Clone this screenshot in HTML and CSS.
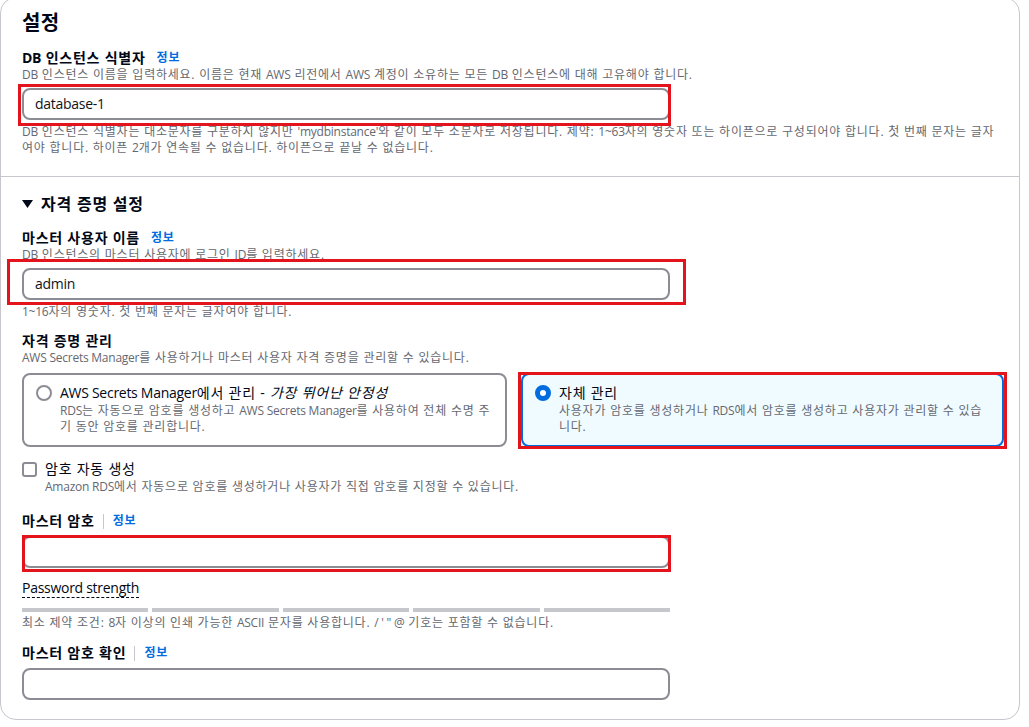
FILE: index.html
```html
<!DOCTYPE html>
<html lang="ko">
<head>
<meta charset="utf-8">
<title>설정</title>
<link rel="stylesheet" href="styles.css">
</head>
<body>
<div class="card">
  <section class="sec sec-top">
    <h2 class="title">설정</h2>
    <div class="field f-first">
      <div class="label"><span><span lang="en">DB</span> 인스턴스 식별자</span><a class="info">정보</a></div>
      <div class="desc"><span lang="en">DB</span> 인스턴스 이름을 입력하세요. 이름은 현재 <span lang="en">AWS</span> 리전에서 <span lang="en">AWS</span> 계정이 소유하는 모든 <span lang="en">DB</span> 인스턴스에 대해 고유해야 합니다.</div>
      <div class="annot">
        <div class="input" lang="en">database-1</div>
        <span class="mark mark-1"></span>
      </div>
      <div class="hint"><span lang="en">DB</span> 인스턴스 식별자는 대소문자를 구분하지 않지만 <span lang="en">'mydbinstance'</span>와 같이 모두 소문자로 저장됩니다. 제약: <span lang="en">1~63</span>자의 영숫자 또는 하이픈으로 구성되어야 합니다. 첫 번째 문자는 글자여야 합니다. 하이픈 <span lang="en">2</span>개가 연속될 수 없습니다. 하이픈으로 끝날 수 없습니다.</div>
    </div>
  </section>
  <section class="sec sec-cred">
    <div class="expander">
      <svg class="caret" width="11" height="8" viewBox="0 0 11 8"><polygon points="0,0 11,0 5.5,8" fill="#000716"/></svg>
      <span>자격 증명 설정</span>
    </div>
    <div class="field f-user">
      <div class="label"><span>마스터 사용자 이름</span><a class="info">정보</a></div>
      <div class="desc"><span lang="en">DB</span> 인스턴스의 마스터 사용자에 로그인 <span lang="en">ID</span>를 입력하세요.</div>
      <div class="annot">
        <div class="input" lang="en">admin</div>
        <span class="mark mark-2"></span>
      </div>
      <div class="hint"><span lang="en">1~16</span>자의 영숫자. 첫 번째 문자는 글자여야 합니다.</div>
    </div>
    <div class="field f-manage">
      <div class="label"><span>자격 증명 관리</span></div>
      <div class="desc"><span lang="en">AWS Secrets Manager</span>를 사용하거나 마스터 사용자 자격 증명을 관리할 수 있습니다.</div>
      <div class="tiles">
        <div class="tile">
          <span class="radio"></span>
          <div class="tile-body">
            <div class="tile-title"><span lang="en">AWS Secrets Manager</span>에서 관리 - <em>가장 뛰어난 안정성</em></div>
            <div class="tile-desc"><span lang="en">RDS</span>는 자동으로 암호를 생성하고 <span lang="en">AWS Secrets Manager</span>를 사용하여 전체 수명 주기 동안 암호를 관리합니다.</div>
          </div>
        </div>
        <div class="annot">
          <div class="tile tile-on">
            <span class="radio radio-on"></span>
            <div class="tile-body">
              <div class="tile-title">자체 관리</div>
              <div class="tile-desc">사용자가 암호를 생성하거나 <span lang="en">RDS</span>에서 암호를 생성하고 사용자가 관리할 수 있습니다.</div>
            </div>
          </div>
          <span class="mark mark-3"></span>
        </div>
      </div>
    </div>
    <div class="check-row">
      <span class="checkbox"></span>
      <div>
        <div class="check-label">암호 자동 생성</div>
        <div class="desc"><span lang="en">Amazon RDS</span>에서 자동으로 암호를 생성하거나 사용자가 직접 암호를 지정할 수 있습니다.</div>
      </div>
    </div>
    <div class="field f-pass">
      <div class="label"><span>마스터 암호</span><span class="sep"></span><a class="info info-sep">정보</a></div>
      <div class="annot annot-pass">
        <div class="input"></div>
        <span class="mark mark-4"></span>
      </div>
      <div class="strength"><span lang="en">Password strength</span></div>
      <div class="bars"><span></span><span></span><span></span><span></span><span></span></div>
      <div class="hint hint-pass">최소 제약 조건: <span lang="en">8</span>자 이상의 인쇄 가능한 <span lang="en">ASCII</span> 문자를 사용합니다. <span lang="en">/ ' " @</span> 기호는 포함할 수 없습니다.</div>
    </div>
    <div class="field f-confirm">
      <div class="label"><span>마스터 암호 확인</span><span class="sep"></span><a class="info info-sep">정보</a></div>
      <div class="annot annot-pass">
        <div class="input"></div>
      </div>
    </div>
  </section>
</div>
</body>
</html>
```
FILE: styles.css
```css
* { box-sizing: border-box; }
html, body { margin: 0; padding: 0; background: #ffffff; }
body {
  font-family: "Open Sans", "Noto Sans CJK KR", sans-serif;
  color: #000716;
  font-size: 14px;
  line-height: 20px;
  letter-spacing: 0.055em;
}
:lang(en) { letter-spacing: -0.02em; }
.card {
  width: 1020px;
  margin-top: -3px;
  border: 1px solid #c6c6cd;
  border-radius: 16px;
  background: #fff;
}
.sec { padding: 0 15px 0 21px; }
.sec-top { padding-top: 13px; padding-bottom: 20px; border-bottom: 1px solid #c6c6cd; }
.sec-cred { padding-top: 17px; padding-bottom: 19px; }
.title {
  margin: 0;
  font-size: 20px;
  line-height: 24px;
  font-weight: 700;
  letter-spacing: 0.02em;
}
.field { display: flex; flex-direction: column; }
.f-first { margin-top: 14px; }
.label {
  font-size: 14px;
  line-height: 18px;
  font-weight: 700;
  display: flex;
  align-items: center;
}
.info {
  color: #006ce0;
  font-size: 12px;
  font-weight: 700;
  margin-left: 11px;
  text-decoration: none;
}
.info-sep { margin-left: 0; }
.sep {
  display: inline-block;
  width: 1px;
  height: 15px;
  background: #c6c6cd;
  margin: 0 9px 0 8px;
}
.desc {
  font-size: 12px;
  line-height: 16px;
  color: #656871;
}
.hint {
  font-size: 12px;
  line-height: 16px;
  color: #656871;
  margin-top: 4px;
}
.annot { position: relative; }
.field > .annot { margin-top: 5px; width: 648px; }
.input {
  width: 648px;
  height: 32px;
  border: 2px solid #8c8c94;
  border-radius: 8px;
  padding: 0 11px;
  font-size: 14px;
  line-height: 28px;
  color: #0f141a;
  background: #fff;
}
.mark {
  position: absolute;
  border: 3px solid #e3141c;
  pointer-events: none;
  z-index: 2;
}
.mark-1 { left: -4px; top: -4px; right: -1px; bottom: -6px; }
.mark-2 { left: -15px; top: -9px; right: -16px; bottom: -5px; }
.mark-3 { left: -3px; top: -1px; right: -3px; bottom: -2px; }
.mark-4 { left: 0; top: -1px; right: -1px; bottom: -4px; }
.expander {
  display: flex;
  align-items: center;
  font-size: 16px;
  line-height: 20px;
  font-weight: 700;
}
.caret { margin: 0 8px 0 0; }
.f-user { margin-top: 15px; }
.f-manage { margin-top: 12px; }
.tiles {
  margin-top: 7px;
  display: grid;
  grid-template-columns: 485px 483px;
  column-gap: 14px;
}
.tile {
  display: flex;
  align-items: flex-start;
  border: 2px solid #8c8c94;
  border-radius: 8px;
  padding: 8px 12px 10px 12px;
  min-height: 74px;
  background: #fff;
}
.tile-on {
  border-color: #006ce0;
  background: #f0fbff;
  height: 100%;
}
.radio {
  flex: none;
  width: 16px;
  height: 16px;
  border: 2px solid #8c8c94;
  border-radius: 50%;
  margin-top: 2px;
  margin-right: 8px;
  background: #fff;
}
.radio-on { border: 5px solid #006ce0; }
.tile-title { font-size: 14px; line-height: 20px; }
.tile-title em { font-style: italic; }
.tile-desc { font-size: 12px; line-height: 16px; color: #656871; padding-right: 2px; }
.check-row {
  margin-top: 12px;
  display: flex;
  align-items: flex-start;
}
.checkbox {
  flex: none;
  width: 15px;
  height: 15px;
  border: 2px solid #8c8c94;
  border-radius: 3px;
  margin: 3px 8px 0 0;
}
.check-label { font-size: 14px; line-height: 20px; }
.f-pass { margin-top: 17px; }
.field > .annot-pass { margin-top: 6px; }
.strength {
  margin-top: 11px;
  display: flex;
}
.strength span {
  font-size: 14px;
  line-height: 18px;
  border-bottom: 1px dashed #000716;
}
.bars {
  margin-top: 10px;
  width: 648px;
  display: grid;
  grid-template-columns: repeat(5, 1fr);
  column-gap: 4px;
}
.bars span { height: 4px; background: #c6c6cd; }
.hint-pass { margin-top: 3px; }
.f-confirm { margin-top: 13px; }
```
